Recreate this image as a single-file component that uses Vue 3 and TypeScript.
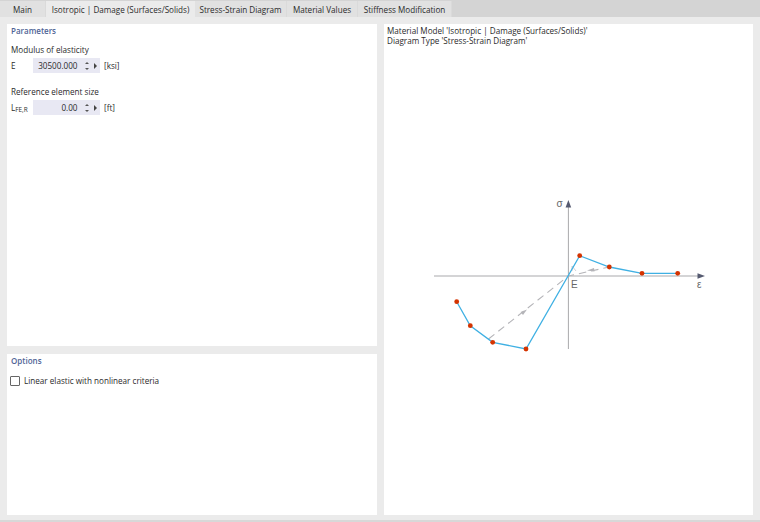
<script setup lang="ts">
const tabs = [
  { label: 'Main', width: 46 },
  { label: 'Isotropic | Damage (Surfaces/Solids)', width: 149 },
  { label: 'Stress-Strain Diagram', width: 92 },
  { label: 'Material Values', width: 71 },
  { label: 'Stiffness Modification', width: 94 },
]

const points = [
  [456.7, 301.7],
  [470.3, 325.7],
  [492.7, 342.3],
  [526, 349],
  [579.7, 255.7],
  [609.3, 267],
  [642, 273.3],
  [677.7, 273.3],
].map(([x, y]) => [x - 384, y - 190])

const line = points.map((p) => p.join(',')).join(' ')
</script>

<template>
  <div class="window">
    <div class="tabs">
      <div
        v-for="(tab, i) in tabs"
        :key="tab.label"
        class="tab"
        :class="{ active: i === 1 }"
        :style="{ width: tab.width + 'px' }"
      >{{ tab.label }}</div>
    </div>
    <div class="content">
      <div class="left">
        <section class="panel params">
          <h2>Parameters</h2>
          <div class="label">Modulus of elasticity</div>
          <div class="row">
            <span class="sym">E</span>
            <div class="input">
              <span class="value">30500.000</span>
              <span class="spin"><i class="up" /><i class="down" /></span>
              <i class="next" />
            </div>
            <span class="unit">[ksi]</span>
          </div>
          <div class="label second">Reference element size</div>
          <div class="row">
            <span class="sym">L<sub>FE,R</sub></span>
            <div class="input">
              <span class="value">0.00</span>
              <span class="spin"><i class="up" /><i class="down" /></span>
              <i class="next" />
            </div>
            <span class="unit">[ft]</span>
          </div>
        </section>
        <section class="panel options">
          <h2>Options</h2>
          <label class="check"><span class="box" />Linear elastic with nonlinear criteria</label>
        </section>
      </div>
      <section class="panel diagram">
        <div class="title">Material Model 'Isotropic | Damage (Surfaces/Solids)'<br />Diagram Type 'Stress-Strain Diagram'</div>
        <svg class="chart" width="369" height="180" viewBox="0 0 369 180">
          <line x1="50" y1="86" x2="316" y2="86" stroke="#a9a9ac" stroke-width="1" />
          <line x1="184.4" y1="159" x2="184.4" y2="14" stroke="#a9a9ac" stroke-width="1" />
          <polygon points="321,86 313.5,83.2 313.5,88.8" fill="#555a70" />
          <polygon points="184.4,10 181.6,17.5 187.2,17.5" fill="#555a70" />
          <polyline points="104.5,149 184.4,86 225.3,77" fill="none" stroke="#b4b4b8" stroke-width="1.1" stroke-dasharray="7.5 5" />
          <polygon points="143,119.5 136.5,122 139,125" fill="#b4b4b8" />
          <polygon points="203,80.5 210,78 210.5,81.5" fill="#b4b4b8" />
          <polyline points="188,81 188,76 192,81" fill="none" stroke="#c4c4c8" stroke-width="0.8" />
          <polyline :points="line" fill="none" stroke="#3fb0e3" stroke-width="1.3" />
          <circle v-for="p in points" :key="p[0]" :cx="p[0]" :cy="p[1]" r="2.4" fill="#d43300" />
          <text x="172.5" y="17" class="axis">σ</text>
          <text x="313" y="98" class="axis">ε</text>
          <text x="187" y="98" class="axis">E</text>
        </svg>
      </section>
    </div>
  </div>
</template>

<style>
html,
body {
  margin: 0;
  background: #ebebeb;
}
</style>

<style scoped>
.window {
  width: 760px;
  height: 522px;
  box-sizing: border-box;
  overflow: hidden;
  display: flex;
  flex-direction: column;
  background: #ebebeb;
  border-bottom: 2px solid #d8d8d8;
  font-family: "Open Sans", sans-serif;
  font-size: 8.15px;
  color: #2b2b2b;
}

.tabs {
  flex: none;
  display: flex;
  box-sizing: border-box;
  height: 17px;
  padding-top: 1px;
  background: #d4d4d4;
}

.tab {
  box-sizing: border-box;
  display: flex;
  align-items: center;
  justify-content: center;
  background: #e1e1e1;
  border-right: 1px solid #dadada;
  white-space: nowrap;
}

.tab.active {
  background: #ebebeb;
  border-right: 0;
}

.content {
  flex: 1;
  min-height: 0;
  display: flex;
  gap: 7px;
  padding: 7px 7px 5px;
}

.left {
  width: 370px;
  display: flex;
  flex-direction: column;
  gap: 8px;
}

.panel {
  background: #fff;
  box-sizing: border-box;
}

.params {
  height: 322px;
  padding: 1px 4px;
}

.options {
  flex: 1;
  padding: 1px 4px;
}

h2 {
  margin: 0;
  font-size: 8px;
  line-height: 11px;
  font-weight: 600;
  color: #4f6496;
}

.label {
  margin-top: 8px;
  line-height: 12px;
}

.label.second {
  margin-top: 13px;
}

.row {
  display: flex;
  align-items: center;
  height: 15px;
  margin-top: 2px;
}

.sym {
  width: 22px;
}

sub {
  font-size: 6.4px;
  vertical-align: -1px;
  line-height: 0;
}

.input {
  width: 67px;
  height: 15px;
  display: flex;
  align-items: center;
  background: #e8e8f3;
}

.value {
  flex: 1;
  text-align: right;
}

.spin {
  width: 6px;
  margin-left: 6px;
  display: flex;
  flex-direction: column;
  align-items: center;
  gap: 4px;
}

.up,
.down {
  width: 0;
  height: 0;
  border-left: 2px solid transparent;
  border-right: 2px solid transparent;
}

.up {
  border-bottom: 2px solid #555;
}

.down {
  border-top: 2px solid #555;
}

.next {
  width: 0;
  height: 0;
  margin: 0 3px 0 4.5px;
  border-top: 3px solid transparent;
  border-bottom: 3px solid transparent;
  border-left: 3.5px solid #444;
}

.unit {
  margin-left: 4px;
}

.check {
  display: flex;
  align-items: center;
  gap: 4px;
  margin-top: 9px;
  margin-left: -1px;
}

.box {
  width: 8px;
  height: 8px;
  border: 1px solid #666;
  border-radius: 1px;
}

.diagram {
  width: 369px;
  padding: 2px 0 0;
}

.title {
  padding-left: 3px;
  line-height: 10px;
}

.chart {
  display: block;
  margin-top: 144px;
}

.axis {
  font-family: "Liberation Sans", sans-serif;
  font-size: 10px;
  fill: #666;
}
</style>
